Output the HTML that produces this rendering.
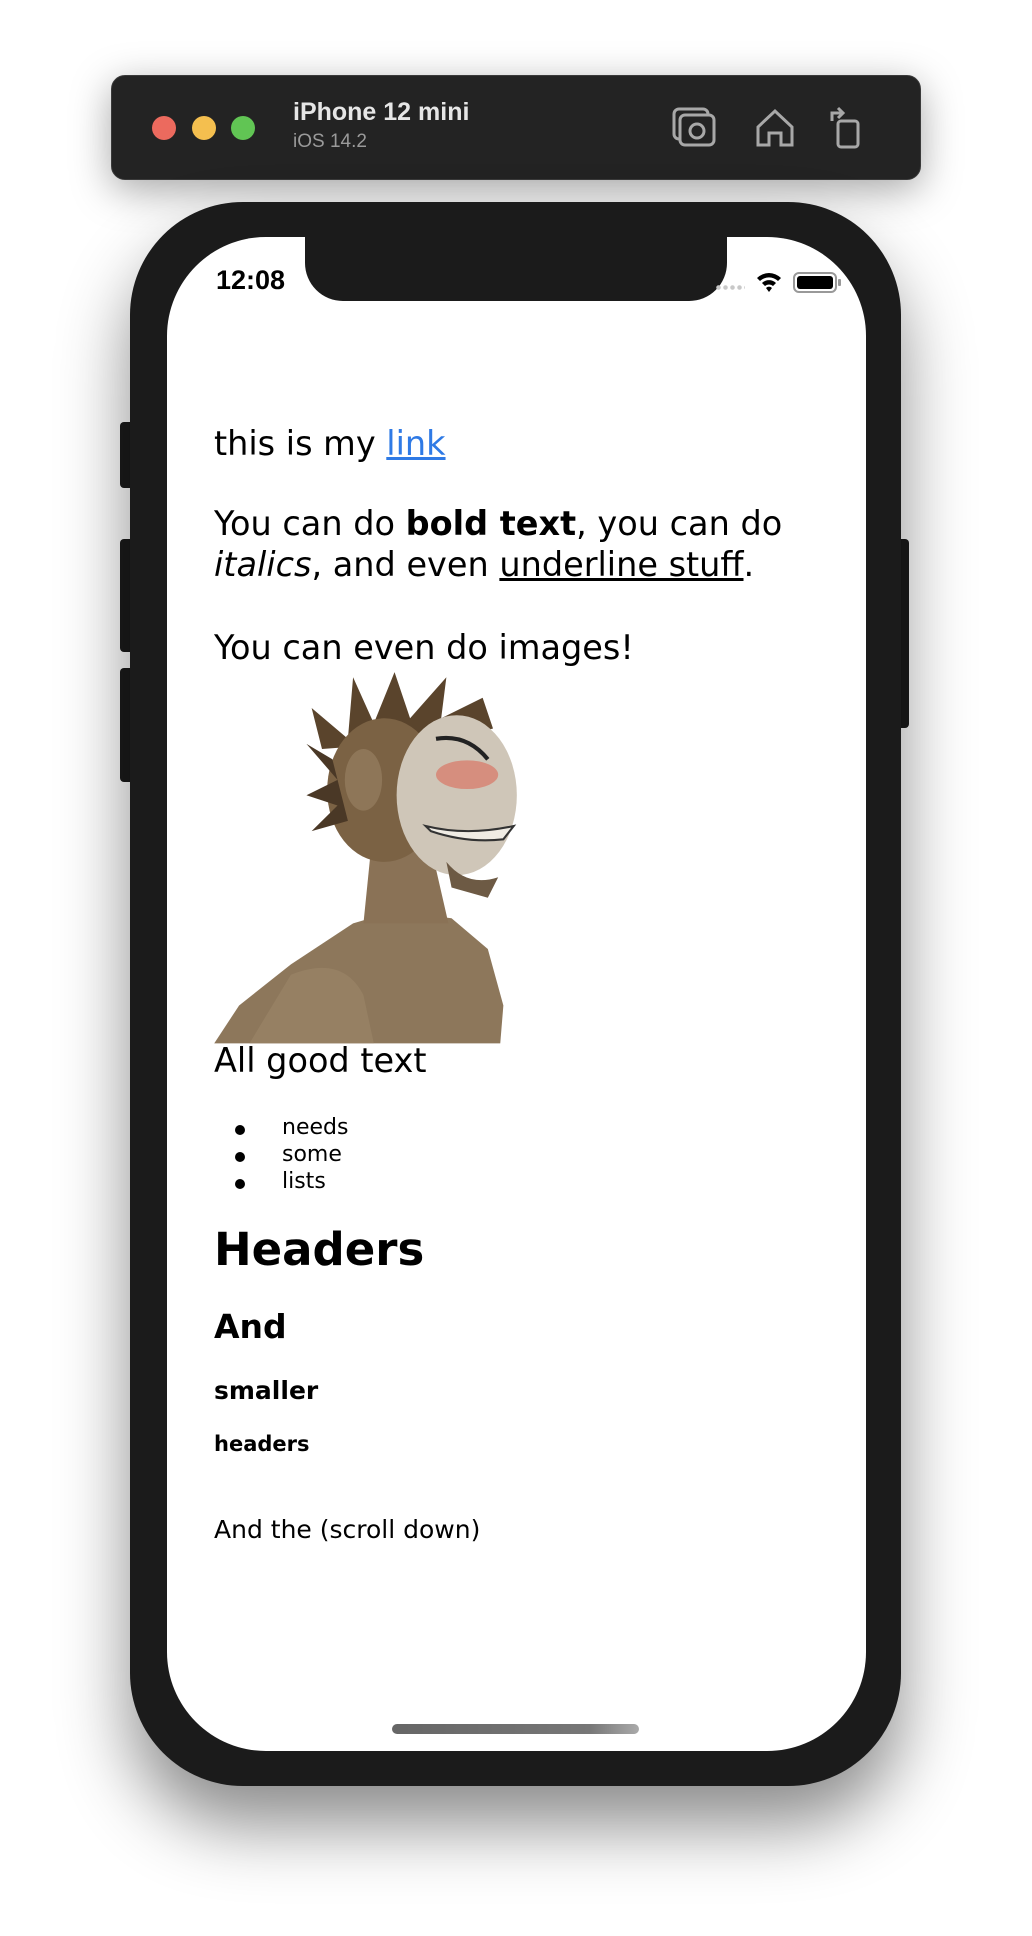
<!DOCTYPE html>
<html><head><meta charset="utf-8"><style>
html,body{margin:0;padding:0;}
body{width:1032px;height:1936px;background:#fff;position:relative;overflow:hidden;font-family:"DejaVu Sans","Liberation Sans",sans-serif;}
.abs{position:absolute;}
.bar{left:111px;top:75px;width:810px;height:105px;background:#232323;border-radius:14px;box-shadow:0 10px 40px rgba(0,0,0,.35);border:1px solid #3a3a3a;box-sizing:border-box;}
.dot{width:24px;height:24px;border-radius:50%;top:116px;}
.phone{left:130px;top:202px;width:771px;height:1584px;background:#1b1b1b;border-radius:113px;box-shadow:0 40px 70px rgba(0,0,0,.45);}
.btn{background:#1b1b1b;border-radius:4px;}
.screen{left:167px;top:237px;width:699px;height:1514px;background:#fff;border-radius:99px;overflow:hidden;}
.notch{left:305px;top:227px;width:422px;height:74px;background:#1b1b1b;border-radius:0 0 38px 38px;}
.c{left:214px;color:#000;white-space:nowrap;}
.t34{font-size:33.5px;}
</style></head><body>
<div class="abs bar"></div>
<div class="abs dot" style="left:152px;background:#ec6a5e"></div>
<div class="abs dot" style="left:192px;background:#f4bf4f"></div>
<div class="abs dot" style="left:231px;background:#61c554"></div>
<div class="abs" style="left:293px;top:98px;color:#e6e6e6;font:bold 25px 'Liberation Sans',sans-serif">iPhone 12 mini</div>
<div class="abs" style="left:293px;top:131px;color:#9a9a9a;font:19px 'Liberation Sans',sans-serif">iOS 14.2</div>
<svg class="abs" style="left:672px;top:105px" width="200" height="46" viewBox="0 0 200 46" fill="none" stroke="#a8a8a8" stroke-width="3">
<rect x="2" y="4" width="34" height="30" rx="5"/><rect x="8" y="10" width="34" height="30" rx="5" fill="#232323"/><circle cx="25" cy="26" r="7"/>
<path d="M86 40V22L103 6L120 22V40H109V28H97V40Z"/>
<rect x="166" y="16" width="20" height="26" rx="3"/><path d="M160 16V8h10M166 3l5 5-5 5"/>
</svg>
<div class="abs btn" style="left:120px;top:422px;width:14px;height:66px"></div>
<div class="abs btn" style="left:120px;top:539px;width:14px;height:113px"></div>
<div class="abs btn" style="left:120px;top:668px;width:14px;height:114px"></div>
<div class="abs btn" style="left:896px;top:539px;width:13px;height:189px"></div>
<div class="abs phone"></div>
<div class="abs screen"></div>
<div class="abs notch"></div>
<div class="abs" style="left:216px;top:265px;font:bold 27px 'Liberation Sans',sans-serif">12:08</div>
<div class="abs" style="left:715px;top:285px;width:30px;height:5px;background-image:radial-gradient(circle,#c8c8c8 2px,transparent 2.5px);background-size:7px 5px"></div>
<svg class="abs" style="left:753px;top:269px" width="90" height="26" viewBox="0 0 90 26">
<path d="M4 9a17 17 0 0 1 24 0l-3 3a13 13 0 0 0-18 0z M9 14a10 10 0 0 1 14 0l-3 3a6 6 0 0 0-8 0z M13 19a4 4 0 0 1 6 0l-3 4z" fill="#000"/>
<rect x="41" y="4" width="42" height="19" rx="5" fill="none" stroke="#999" stroke-width="2"/><rect x="44" y="7" width="36" height="13" rx="3" fill="#000"/><rect x="85" y="10" width="3" height="7" rx="1" fill="#999"/>
</svg>
<div class="abs c t34" style="top:424px">this is my <span style="color:#2f7ae5;text-decoration:underline">link</span></div>
<div class="abs c t34" style="top:503px;line-height:41px">You can do <b>bold text</b>, you can do<br><i>italics</i>, and even <u>underline stuff</u>.</div>
<div class="abs c t34" style="top:628px">You can even do images!</div>
<svg class="abs" style="left:208px;top:667px" width="342" height="400" viewBox="0 0 330 390" preserveAspectRatio="none">
<path d="M6 367L30 330L80 290L140 250L180 238L235 245L270 275L285 330L282 367Z" fill="#8d775b"/>
<path d="M150 250L158 170L215 175L232 250Z" fill="#8a7256"/>
<path d="M80 300Q130 280 150 320L160 367L40 367Z" fill="#9a8467" opacity=".7"/>
<path d="M110 80L100 40L135 70L140 10L160 55L180 5L195 50L230 10L225 50L265 30L275 60L240 70Z" fill="#5a442c"/>
<ellipse cx="170" cy="120" rx="55" ry="70" fill="#7b6244"/>
<path d="M120 90L95 75L125 110L95 125L125 135L100 160L135 150Z" fill="#4a3826"/>
<ellipse cx="150" cy="110" rx="18" ry="30" fill="#8e7658"/>
<ellipse cx="240" cy="125" rx="58" ry="78" fill="#cfc6b8"/>
<ellipse cx="250" cy="105" rx="30" ry="14" fill="#d68e7e"/>
<path d="M220 70Q250 65 270 90" stroke="#222" stroke-width="4" fill="none"/>
<path d="M210 155Q250 165 295 155L285 168Q250 172 215 160Z" fill="#f0ece4" stroke="#333" stroke-width="2"/>
<path d="M230 190Q250 215 280 205L270 225L235 215Z" fill="#6d5a44"/>
</svg>
<div class="abs c t34" style="top:1041px">All good text</div>
<div class="abs" style="left:235px;top:1125px;width:10px;height:10px;border-radius:50%;background:#000"></div>
<div class="abs" style="left:235px;top:1152px;width:10px;height:10px;border-radius:50%;background:#000"></div>
<div class="abs" style="left:235px;top:1179px;width:10px;height:10px;border-radius:50%;background:#000"></div>
<div class="abs" style="left:282px;top:1114px;font-size:22px;line-height:27.2px">needs<br>some<br>lists</div>
<div class="abs c" style="top:1223px;font-size:45px;font-weight:bold">Headers</div>
<div class="abs c" style="top:1307px;font-size:33px;font-weight:bold">And</div>
<div class="abs c" style="top:1376px;font-size:25px;font-weight:bold">smaller</div>
<div class="abs c" style="top:1432px;font-size:21px;font-weight:bold">headers</div>
<div class="abs c" style="top:1515px;font-size:25px">And the (scroll down)</div>
<div class="abs" style="left:392px;top:1724px;width:247px;height:10px;border-radius:5px;background:linear-gradient(90deg,#666,#777 80%,#aaa)"></div>
</body></html>
